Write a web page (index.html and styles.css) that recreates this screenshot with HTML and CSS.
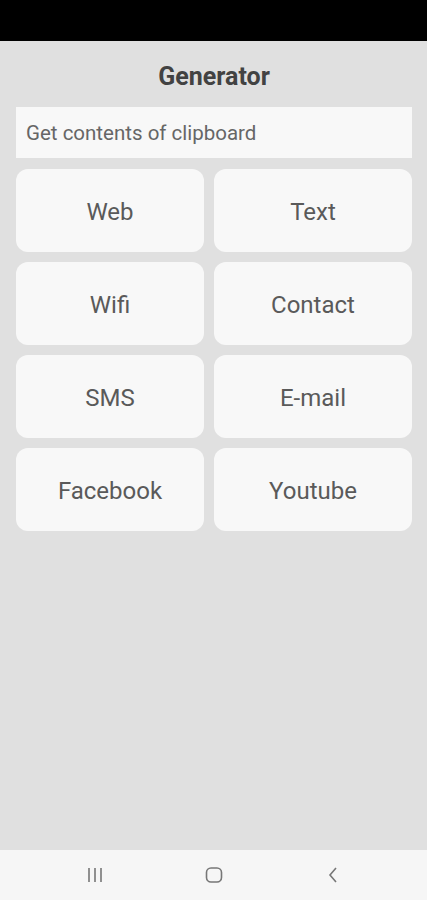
FILE: index.html
```html
<!DOCTYPE html>
<html>
	<head>
		<meta charset='utf-8'>
		<meta name='viewport' content='width=device-width, initial-scale=1'>
		<title>Generator</title>
		<link rel="stylesheet" href="styles.css">
	</head>
	<body>
		<div class='status-bar'></div>
		<main>
			<h1>Generator</h1>
			<input class='clipboard' type='text' placeholder='Get contents of clipboard'>
			<div class='grid'>
				<button>Web</button>
				<button>Text</button>
				<button>Wifi</button>
				<button>Contact</button>
				<button>SMS</button>
				<button>E-mail</button>
				<button>Facebook</button>
				<button>Youtube</button>
			</div>
		</main>
		<nav class='nav-bar'>
			<svg width='20' height='20' viewBox='0 0 20 20'>
				<path d='M4 3v14M10 3v14M16 3v14' stroke='#777' stroke-width='1.6' fill='none'/>
			</svg>
			<svg width='20' height='20' viewBox='0 0 20 20'>
				<rect x='2.5' y='3' width='15' height='14' rx='4.5' stroke='#777' stroke-width='1.6' fill='none'/>
			</svg>
			<svg width='20' height='20' viewBox='0 0 20 20'>
				<path d='M13 3l-6 7 6 7' stroke='#777' stroke-width='1.6' fill='none'/>
			</svg>
		</nav>
	</body>
</html>
```

FILE: styles.css
```css
:root {
	--bg: rgb(224, 224, 224);
	--card: rgb(248, 248, 248);
	--text: rgb(90, 90, 90);
	--title: rgb(66, 66, 66);
}
html {
	font-family: Roboto, "Liberation Sans", sans-serif;
	background-color: var(--bg);
	color: var(--text);
}
body {
	margin: 0;
	padding: 0;
	height: 900px;
	display: flex;
	flex-direction: column;
	background-color: var(--bg);
}
.status-bar {
	height: 41px;
	background-color: #000;
}
main {
	flex: 1;
	padding: 0 15px 0 16px;
}
h1 {
	font-size: 25px;
	font-weight: 700;
	color: var(--title);
	text-align: center;
	margin: 0;
	height: 66px;
	line-height: 72px;
}
.clipboard {
	display: block;
	box-sizing: border-box;
	width: 100%;
	height: 51px;
	border: 0;
	padding: 1px 10px 0 10px;
	background-color: var(--card);
	font-family: Roboto, "Liberation Sans", sans-serif;
	font-size: 20.5px;
	outline: none;
}
.clipboard::placeholder {
	color: rgb(102, 102, 102);
}
.grid {
	display: grid;
	grid-template-columns: 188fr 198fr;
	grid-auto-rows: 83px;
	gap: 10px;
	margin-top: 11px;
}
button {
	border: 0;
	border-radius: 12px;
	background-color: var(--card);
	color: var(--text);
	font-family: Roboto, "Liberation Sans", sans-serif;
	font-size: 24px;
	padding: 2px 0 0 0;
}
.nav-bar {
	height: 50px;
	background-color: rgb(246, 246, 246);
	display: grid;
	grid-template-columns: repeat(3, 119px);
	justify-content: center;
	align-items: center;
	justify-items: center;
}
```
